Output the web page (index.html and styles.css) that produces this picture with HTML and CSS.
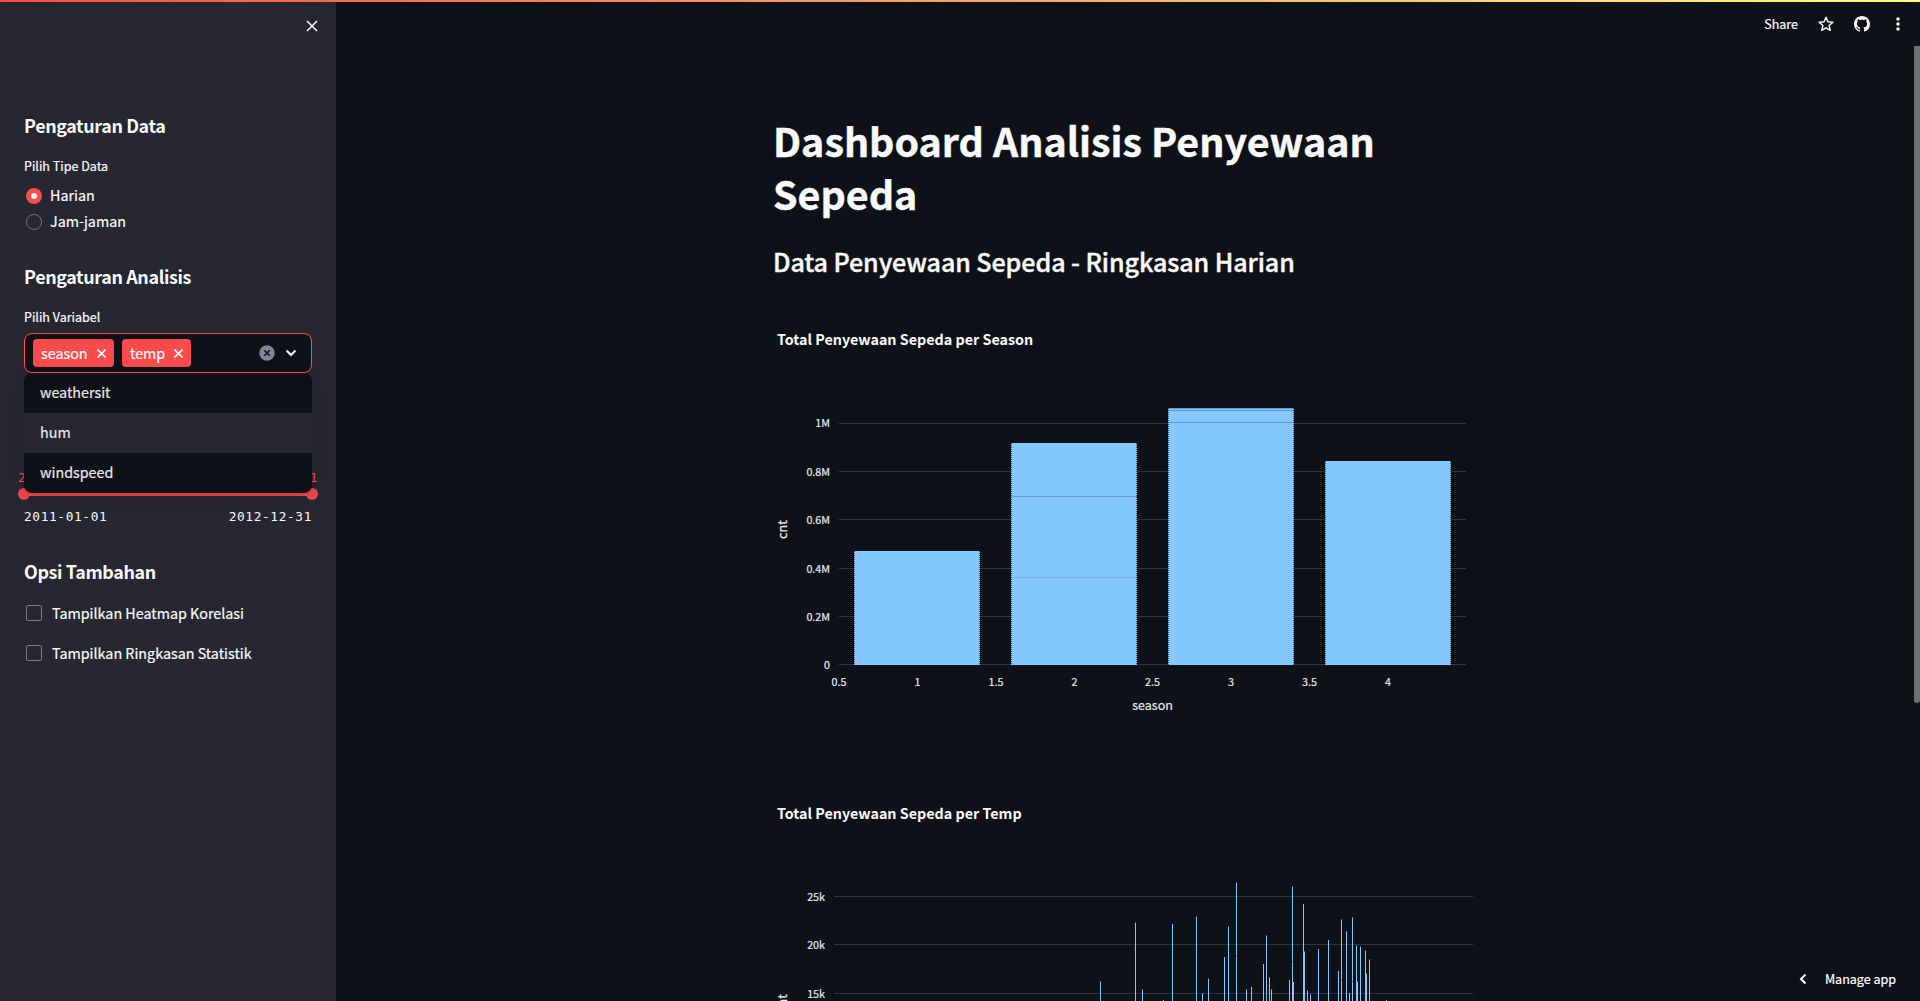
FILE: index.html
```html
<!DOCTYPE html>
<html lang="id">
<head>
<meta charset="utf-8">
<title>Dashboard Analisis Penyewaan Sepeda</title>
<link rel="stylesheet" href="styles.css">
</head>
<body>
<div class="decoration"></div>
<div class="app">
  <aside class="sidebar">
    <div class="sidebar-top">
      <svg class="close" viewBox="0 0 12 12"><path d="M1 1L11 11M11 1L1 11"/></svg>
    </div>
    <h2 class="section-title">Pengaturan Data</h2>
    <div class="label label-type">Pilih Tipe Data</div>
    <div class="radio-group">
      <label class="radio"><span class="dot checked"></span><span class="text">Harian</span></label>
      <label class="radio"><span class="dot"></span><span class="text">Jam-jaman</span></label>
    </div>
    <h2 class="section-title title-analysis">Pengaturan Analisis</h2>
    <div class="label label-var">Pilih Variabel</div>
    <div class="select">
      <div class="tags">
        <span class="tag tag-season"><span class="text">season</span><svg viewBox="0 0 8 8"><path d="M.4.4L7.6 7.6M7.6.4L.4 7.6"/></svg></span>
        <span class="tag tag-temp"><span class="text">temp</span><svg viewBox="0 0 8 8"><path d="M.4.4L7.6 7.6M7.6.4L.4 7.6"/></svg></span>
      </div>
      <svg class="clear" viewBox="0 0 16 16"><circle cx="8" cy="8" r="7.7"/><path d="M5.3 5.3L10.7 10.7M10.7 5.3L5.3 10.7"/></svg>
      <svg class="chevron" viewBox="0 0 12 8"><path d="M1.5 1.5L6 6L10.500 1.500"/></svg>
      <ul class="menu">
        <li>weathersit</li>
        <li class="active">hum</li>
        <li>windspeed</li>
      </ul>
    </div>
    <div class="slider">
      <div class="slider-values"><span>2011-01-01</span><span>2012-12-31</span></div>
      <div class="track"><span class="thumb"></span><span class="thumb"></span></div>
      <div class="slider-range"><span>2011-01-01</span><span>2012-12-31</span></div>
    </div>
    <h2 class="section-title title-options">Opsi Tambahan</h2>
    <label class="check"><span class="box"></span><span class="text">Tampilkan Heatmap Korelasi</span></label>
    <label class="check"><span class="box"></span><span class="text">Tampilkan Ringkasan Statistik</span></label>
  </aside>
  <main class="main">
    <header class="toolbar">
      <span class="share">Share</span>
      <svg class="star" viewBox="0 0 16 16"><path d="M8 1.200L9.900 5.800L14.900 6.200L11.100 9.500L12.300 14.400L8 11.800L3.700 14.400L4.900 9.500L1.100 6.200L6.100 5.800Z"/></svg>
      <svg class="github" viewBox="0 0 16 16"><path d="M8 0C3.580 0 0 3.580 0 8c0 3.540 2.290 6.530 5.470 7.590.4.070.55-.17.55-.38 0-.19-.01-.82-.01-1.490-2.010.37-2.530-.49-2.690-.94-.09-.23-.48-.94-.82-1.130-.28-.15-.68-.52-.01-.53.63-.01 1.080.58 1.230.82.72 1.210 1.870.87 2.330.66.07-.52.28-.87.51-1.070-1.780-.2-3.640-.89-3.640-3.950 0-.87.31-1.590.82-2.150-.08-.2-.36-1.020.08-2.120 0 0 .67-.21 2.200.82.64-.18 1.320-.27 2-.27s1.360.09 2 .27c1.530-1.040 2.200-.82 2.200-.82.44 1.100.16 1.920.08 2.120.51.56.82 1.270.82 2.150 0 3.070-1.870 3.750-3.650 3.950.29.25.54.73.54 1.480 0 1.070-.01 1.930-.01 2.200 0 .21.15.46.55.38A8.010 8.010 0 0 0 16 8c0-4.420-3.580-8-8-8z"/></svg>
      <svg class="kebab" viewBox="0 0 4 14"><circle cx="2" cy="2" r="1.750"/><circle cx="2" cy="7" r="1.750"/><circle cx="2" cy="12" r="1.750"/></svg>
    </header>
    <div class="content">
      <h1>Dashboard Analisis Penyewaan Sepeda</h1>
      <h2 class="subtitle">Data Penyewaan Sepeda - Ringkasan Harian</h2>
      <svg class="chart" viewBox="773 316 704 450">
        <text class="chart-title" x="777" y="345">Total Penyewaan Sepeda per Season</text>
        <path class="grid" d="M839 423.500H1466M839 471.500H1466M839 519.500H1466M839 568.500H1466M839 616.500H1466M839 664.500H1466"/>
        <g class="bar">
          <rect x="854" y="551" width="126" height="114"/>
          <rect x="1011" y="443" width="126" height="222"/>
          <rect x="1168" y="408" width="126" height="257"/>
          <rect x="1325" y="461" width="126" height="204"/>
        </g>
        <path class="edge" d="M854.500 551V665M979.500 551V665M1011.500 443V665M1136.500 443V665M1168.500 408V665M1293.500 408V665M1325.500 461V665M1450.500 461V665"/>
        <path class="seam" d="M1012 496.500H1137M1168 408.500H1294M1168 410.500H1294M1168 422.500H1294"/>
        <path class="seam faint" d="M1012 577.500H1137"/>
        <g class="tick end">
          <text x="830" y="427">1M</text><text x="830" y="476">0.8M</text><text x="830" y="524">0.6M</text><text x="830" y="573">0.4M</text><text x="830" y="621">0.2M</text><text x="830" y="669">0</text>
        </g>
        <g class="tick mid">
          <text x="839" y="686">0.5</text><text x="917.500" y="686">1</text><text x="996" y="686">1.5</text><text x="1074.500" y="686">2</text><text x="1152.500" y="686">2.5</text><text x="1231" y="686">3</text><text x="1309.500" y="686">3.5</text><text x="1388" y="686">4</text>
        </g>
        <text class="axis" x="1152.500" y="710">season</text>
        <text class="axis" transform="translate(787 529.500) rotate(-90)">cnt</text>
      </svg>
      <svg class="chart" viewBox="773 790 704 450">
        <text class="chart-title" x="777" y="819">Total Penyewaan Sepeda per Temp</text>
        <path class="grid" d="M834 896.500H1473M834 944.500H1473M834 993.500H1473M834 1041.500H1473M834 1089.500H1473M834 1138.500H1473"/>
        <path class="spikes" d="M1100.500 981V1138M1135.500 922V1138M1142.500 989V1138M1163.500 1000V1138M1172.500 924V1138M1196.500 916V1138M1202.500 993V1138M1208.500 978V1138M1224.500 957V1138M1228.500 926V1138M1236.500 882V1138M1246.500 989V1138M1251.500 987V1138M1263.500 964V1138M1266.500 935V1138M1269.500 977V1138M1271.500 989V1138M1289.500 980V1138M1292.500 886V1138M1293.500 982V1138M1303.500 904V1138M1304.500 951V1138M1307.500 990V1138M1310.500 994V1138M1318.500 949V1138M1328.500 940V1138M1338.500 971V1138M1341.500 919V1138M1346.500 931V1138M1349.500 993V1138M1352.500 917V1138M1356.500 945V1138M1357.500 981V1138M1360.500 946V1138M1365.500 950V1138M1366.500 973V1138M1369.500 959V1138M1386.500 1000V1138"/>
        <path class="caps" d="M1100 981.500h1M1135 922.500h1M1142 989.500h1M1196 916.500h1M1202 993.500h1M1208 978.500h1M1228 926.500h1M1236 882.500h1M1236 956.500h1M1246 989.500h1M1266 935.500h1M1269 977.500h1M1271 989.500h1M1292 886.500h1M1292 961.500h1M1304 951.500h1M1307 990.500h1M1310 994.500h1M1341 919.500h1M1341 979.500h1M1346 931.500h1M1352 917.500h1M1352 981.500h1M1356 945.500h1M1357 981.500h1M1360 946.500h1M1365 950.500h1M1366 973.500h1M1369 959.500h1"/>
        <g class="tick end">
          <text x="825" y="901">25k</text><text x="825" y="949">20k</text><text x="825" y="998">15k</text>
        </g>
        <text class="axis" transform="translate(787 1003.500) rotate(-90)">cnt</text>
      </svg>
    </div>
    <div class="scrollbar"></div>
    <button class="manage"><svg viewBox="0 0 8 12"><path d="M6.500 1.500L2 6L6.500 10.500"/></svg><span class="text">Manage app</span></button>
  </main>
</div>
</body>
</html>
```
FILE: styles.css
```css
* { box-sizing: border-box; }
html, body { margin: 0; height: 100%; overflow: hidden; }
body {
  background: #0e1117;
  color: #fafafa;
  font-family: "Noto Sans CJK SC", "Open Sans", sans-serif;
  font-size: 14.32px;
  -webkit-text-stroke: .2px;
}
h1, h2, ul { margin: 0; padding: 0; }
svg { display: block; flex: none; -webkit-text-stroke: 0; }
.text { padding-bottom: 2px; }
.decoration {
  position: fixed; inset: 0 0 auto 0; height: 2px; z-index: 5;
  background: linear-gradient(90deg, #ff4b4b, #fffd80);
}
.app { display: flex; height: 1001px; }

.sidebar {
  width: 336px; flex: none; height: 1001px;
  padding: 0 24px;
  background: #262730;
}
.sidebar-top { display: flex; justify-content: flex-end; height: 110px; padding-top: 20px; margin-right: -6px; }
.close { width: 12px; height: 12px; fill: none; stroke: #fafafa; stroke-width: 1.5; }
.section-title { font-size: 17.9px; font-weight: 600; line-height: 30px; height: 30px; letter-spacing: -.36px; -webkit-text-stroke: 0; }
.label { font-size: 12.530px; line-height: 20px; height: 20px; }
.label-type { margin-top: 16px; }
.radio-group { display: flex; flex-direction: column; margin-top: 7px; }
.radio { display: flex; align-items: center; height: 26px; gap: 8px; padding-left: 2px; }
.radio .text { padding-bottom: 4px; }
.dot { width: 16px; height: 16px; border-radius: 50%; border: 1px solid #6f7078; }
.dot.checked { border: 5px solid #ff4b4b; background: #fafafa; }
.title-analysis { margin-top: 26px; }
.label-var { margin-top: 16px; }

.select {
  position: relative;
  display: flex; align-items: center;
  height: 40px; margin-top: 6px; padding: 0 14px 0 8px;
  border: 1px solid #ff4b4b; border-radius: 8px;
  background: #0e1117;
}
.tags { display: flex; gap: 8px; flex: 1; }
.tag {
  display: flex; align-items: center; justify-content: space-between;
  height: 28px; padding: 0 8px 0 8px;
  border-radius: 4px; background: #ff4b4b;
}
.tag-season { width: 81px; }
.tag-temp { width: 69px; }
.tag svg { width: 9px; height: 9px; fill: none; stroke: #fff; stroke-width: 1.5; }
.clear { width: 16px; height: 16px; fill: #808495; }
.clear path { stroke: #0e1117; stroke-width: 1.6; }
.chevron { width: 12px; height: 8px; margin-left: 10px; fill: none; stroke: #fafafa; stroke-width: 2.2; }
.menu {
  position: absolute; left: -1px; right: -1px; top: 39px; z-index: 2;
  list-style: none; overflow: hidden;
  border-radius: 8px; background: #0e1117;
  box-shadow: 0 4px 16px rgba(0, 0, 0, .16);
}
.menu li { height: 40px; line-height: 38px; padding-left: 16px; color: #e8e8e9; }
.menu .active { background: #262730; }

.slider { margin-top: 94px; font-family: "DejaVu Sans Mono", monospace; font-size: 12.8px; letter-spacing: .63px; -webkit-text-stroke: 0; }
.slider-values { display: flex; justify-content: space-between; margin: 0 -6px; height: 21px; line-height: 21px; color: #ff4b4b; }
.track { display: flex; align-items: center; justify-content: space-between; height: 4px; margin-top: 4px; background: #f04848; }
.thumb { width: 12px; height: 12px; margin: 0 -6px; border-radius: 50%; background: #f04848; }
.slider-range { display: flex; justify-content: space-between; margin-top: 11px; height: 20px; line-height: 20px; }
.title-options { margin-top: 29px; margin-bottom: 7px; }
.check { display: flex; align-items: center; height: 40px; padding-left: 2px; gap: 10px; }
.box { width: 16px; height: 16px; border: 1px solid #7c7d83; border-radius: 2px; }

.main { position: relative; flex: 1; overflow: hidden; }
.toolbar { display: flex; align-items: center; justify-content: flex-end; height: 48px; padding-right: 20px; }
.share { font-size: 12.530px; line-height: 20px; }
.star { width: 16px; height: 16px; margin-left: 20px; fill: none; stroke: #fafafa; stroke-width: 1.4; stroke-linejoin: round; }
.github { width: 16px; height: 16px; margin-left: 20px; fill: #fafafa; }
.kebab { width: 4px; height: 14px; margin-left: 26px; fill: #fafafa; }
.content { width: 704px; margin: 0 auto 0 437px; padding-top: 65px; }
h1 { font-size: 39.400px; font-weight: 700; line-height: 53px; height: 106px; -webkit-text-stroke: .4px; }
.subtitle { font-size: 25.070px; font-weight: 500; line-height: 40px; height: 40px; margin-top: 22px; margin-bottom: 35px; letter-spacing: -.08px; -webkit-text-stroke: .4px; }
.chart { width: 704px; height: 450px; margin-bottom: 24px; }
.chart-title { font-size: 14.320px; font-weight: 700; fill: #fafafa; }
.grid { stroke: #31333f; fill: none; }
.bar { fill: #83c9ff; }
.edge { stroke: #0e1117; stroke-opacity: .6; stroke-dasharray: 1 1; }
.seam { stroke: #0e1117; stroke-opacity: .25; }
.faint { stroke-opacity: .12; }
.spikes { stroke: #83c9ff; }
.caps { stroke: #0e1117; stroke-opacity: .5; }
.tick { font-size: 10.740px; fill: #e6eaf1; stroke: #e6eaf1; stroke-width: .2px; }
.end { text-anchor: end; }
.mid { text-anchor: middle; }
.axis { font-size: 12.530px; fill: #e6eaf1; stroke: #e6eaf1; stroke-width: .2px; text-anchor: middle; }
.scrollbar { position: absolute; right: 0; top: 46px; width: 6px; height: 657px; border-radius: 0 0 3px 3px; background: #6e7074; }
.manage {
  position: absolute; right: 0; bottom: 0;
  display: flex; align-items: center; gap: 18px;
  height: 44px; padding: 0 24px 0 20px; border: 0;
  background: #0e1117; color: #fff; font: 12.530px "Noto Sans CJK SC", sans-serif;
}
.manage svg { width: 8px; height: 12px; fill: none; stroke: #fff; stroke-width: 2; }
```
